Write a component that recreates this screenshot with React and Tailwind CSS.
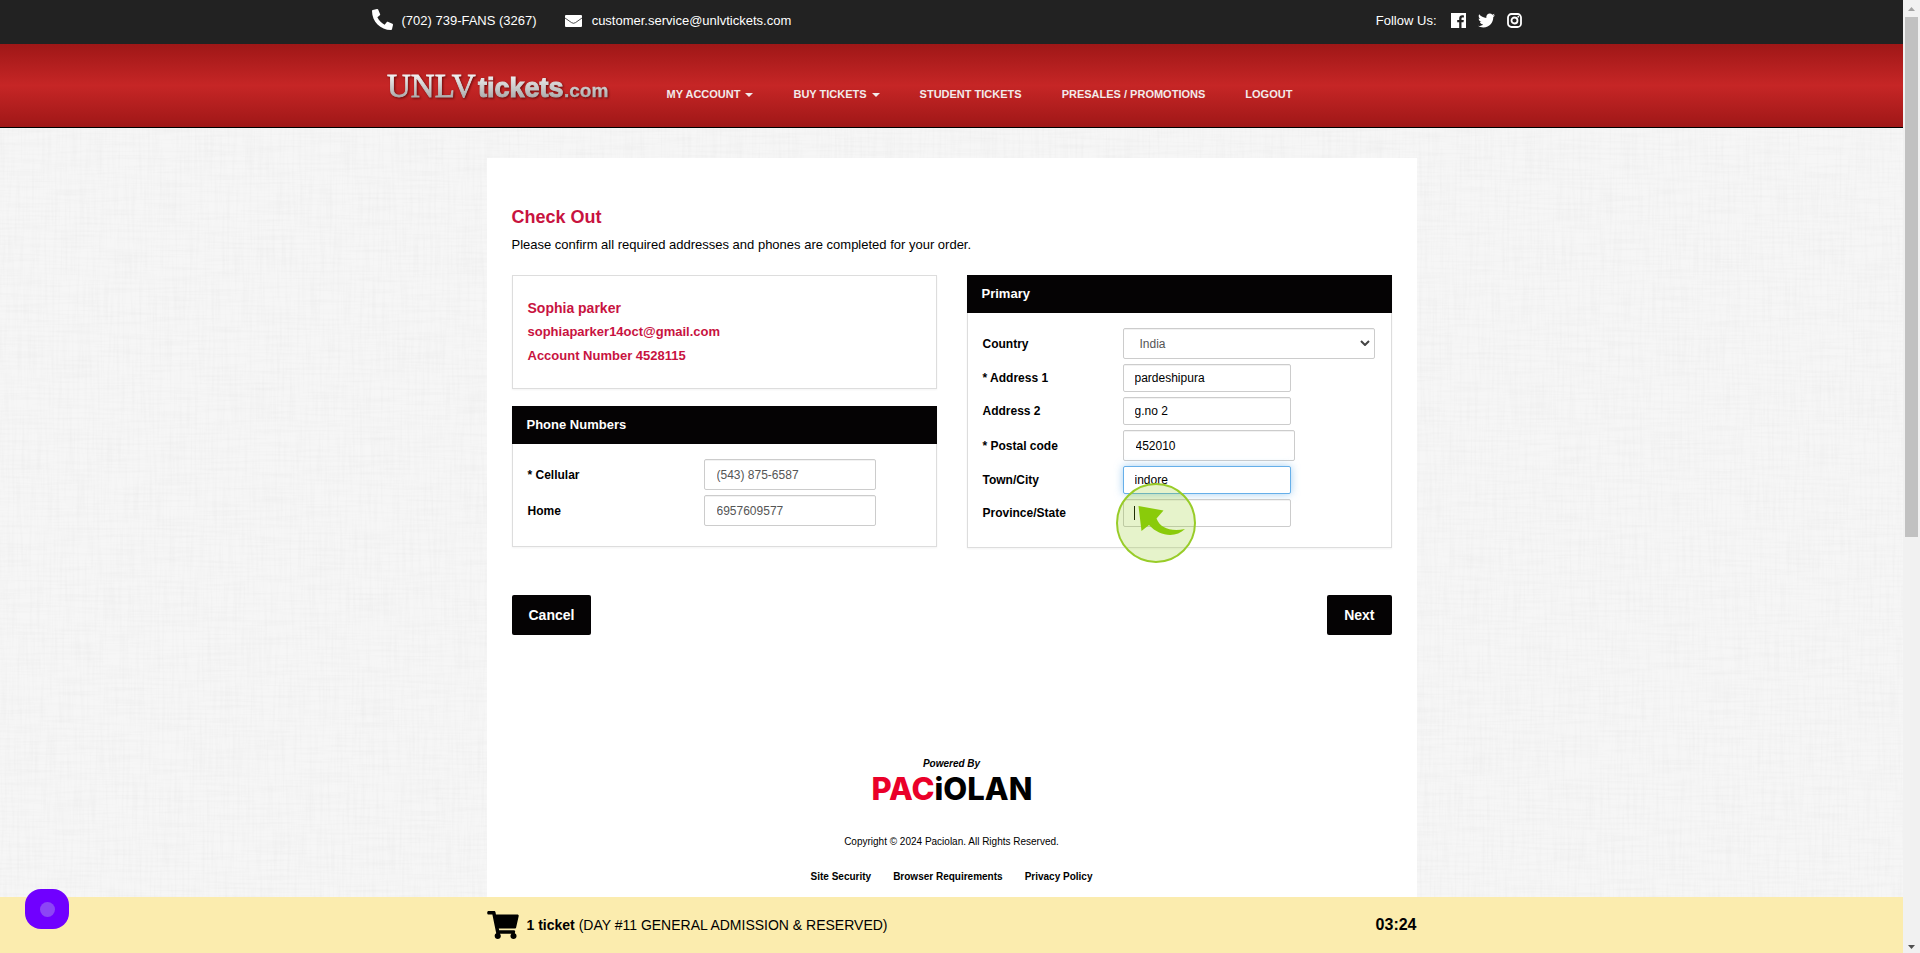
import { useState } from "react";
import { FaPhone, FaTwitter, FaShoppingCart } from "react-icons/fa";

const navLinks = [
  { label: "MY ACCOUNT", menu: true },
  { label: "BUY TICKETS", menu: true },
  { label: "STUDENT TICKETS" },
  { label: "PRESALES / PROMOTIONS" },
  { label: "LOGOUT" },
];

function App() {
  const [formData, setFormData] = useState({
    cellular: "(543) 875-6587",
    home: "6957609577",
    country: "India",
    address1: "pardeshipura",
    address2: "g.no 2",
    postalCode: "452010",
    city: "indore",
    state: "",
  });

  const handleChange = (e) => {
    setFormData({ ...formData, [e.target.name]: e.target.value });
  };

  return (
    <div className="flex h-screen overflow-hidden font-['Liberation_Sans',Arial,sans-serif] text-black">
      <div className="relative flex min-w-0 flex-1 flex-col">
        <TopBar />
        <Header />

        <div className="relative min-h-0 flex-1 overflow-hidden bg-[#f6f6f6]">
          <LinenTexture />
          <main className="relative mx-auto mt-[30px] min-h-full max-w-[930px] bg-white px-[25px] pt-[47px]">
            <h1 className="text-lg leading-6 font-bold text-[#c8133f]">Check Out</h1>
            <p className="mt-[6px] text-[13px] leading-5">
              Please confirm all required addresses and phones are completed for your order.
            </p>

            <form onSubmit={(e) => e.preventDefault()}>
              <div className="mt-5 grid grid-cols-2 items-start gap-[30px]">
                <div className="flex flex-col gap-[17px]">
                  <div className="border border-[#ddd] px-[15px] py-5 text-[13px] leading-6 font-bold text-[#c8133f] shadow-xs">
                    <p className="text-sm leading-6">Sophia parker</p>
                    <p>sophiaparker14oct@gmail.com</p>
                    <p>Account Number 4528115</p>
                  </div>

                  <Panel title="Phone Numbers">
                    <Row label="* Cellular" htmlFor="cellular" labelClass="w-44">
                      <InputField tall name="cellular" type="tel" value={formData.cellular} onChange={handleChange} color="text-[#555]" />
                    </Row>
                    <Row label="Home" htmlFor="home" labelClass="w-44">
                      <InputField tall name="home" type="tel" value={formData.home} onChange={handleChange} color="text-[#555]" />
                    </Row>
                  </Panel>
                </div>

                <Panel title="Primary">
                  <Row label="Country" htmlFor="country">
                    <div className="relative w-[252px]">
                      <select
                        id="country"
                        name="country"
                        value={formData.country}
                        onChange={handleChange}
                        className="h-[31px] w-full appearance-none rounded-xs border border-[#ccc] bg-white px-4 text-xs text-[#555] inset-shadow-2xs"
                      >
                        <option>India</option>
                        <option>United States</option>
                        <option>Canada</option>
                      </select>
                      <svg viewBox="0 0 10 6" className="pointer-events-none absolute top-3 right-[5px] h-[6px] w-[10px]">
                        <path d="M1 1l4 4 4-4" fill="none" stroke="#444" strokeWidth="2" />
                      </svg>
                    </div>
                  </Row>
                  <Row label="* Address 1" htmlFor="address1">
                    <InputField name="address1" value={formData.address1} onChange={handleChange} />
                  </Row>
                  <Row label="Address 2" htmlFor="address2">
                    <InputField name="address2" value={formData.address2} onChange={handleChange} />
                  </Row>
                  <Row label="* Postal code" htmlFor="postalCode">
                    <InputField tall name="postalCode" value={formData.postalCode} onChange={handleChange} />
                  </Row>
                  <Row label="Town/City" htmlFor="city">
                    <InputField active name="city" value={formData.city} onChange={handleChange} />
                  </Row>
                  <Row label="Province/State" htmlFor="state">
                    <div className="relative">
                      <InputField name="state" value={formData.state} onChange={handleChange} />
                      <ClickMarker />
                    </div>
                  </Row>
                </Panel>
              </div>

              <div className="mt-[47px] flex justify-between">
                <button type="button" className="h-10 rounded-xs bg-[#050304] px-[17px] text-sm font-bold text-white">
                  Cancel
                </button>
                <button type="submit" className="h-10 rounded-xs bg-[#050304] px-[17px] text-sm font-bold text-white">
                  Next
                </button>
              </div>
            </form>

            <Footer />
          </main>
        </div>

        <CartBar />
        <button
          type="button"
          aria-label="Open widget"
          className="absolute bottom-6 left-[25px] flex h-10 w-11 items-center justify-center rounded-2xl bg-[#7000ff]"
        >
          <span className="h-[15px] w-[15px] rounded-full bg-[#8c46f5]" />
        </button>
      </div>
      <Scrollbar />
    </div>
  );
}

const TopBar = () => (
  <div className="h-11 shrink-0 bg-[#222] text-[13px] text-white">
    <div className="mx-auto flex h-full max-w-[1160px] items-center justify-between pr-[10px]">
      <div className="flex items-center pb-[2px]">
        <FaPhone className="mb-1 h-[21px] w-[21px] -scale-x-100" />
        <span className="ml-[9px]">(702) 739-FANS (3267)</span>
        <svg viewBox="0 0 17 12" className="ml-7 h-3 w-[17px]">
          <rect width="17" height="12" rx="1" fill="#fff" />
          <path d="M0 3l6.500 4.600q2 1.400 4 0L17 3" fill="none" stroke="#222" strokeWidth="0.800" />
        </svg>
        <a href="#email" className="ml-[10px]">customer.service@unlvtickets.com</a>
      </div>
      <div className="flex items-center pb-[2px]">
        <span>Follow Us:</span>
        <div className="ml-[14px] flex items-center gap-3 pb-[2px]">
          <a href="#facebook" aria-label="Facebook">
            <svg viewBox="0 0 15 15" className="h-[15px] w-[15px]">
              <path fill="#fff" d="M0 0h15v15h-4.500V9.300h2L12.800 7h-2.300V5.600c0-.7.300-1.100 1.100-1.100h1.300V2.400C12.600 2.300 12 2.300 11.300 2.300 9.400 2.300 8.200 3.400 8.200 5.400V7h-2v2.300h2V15H0z" />
            </svg>
          </a>
          <a href="#twitter" aria-label="Twitter">
            <FaTwitter className="h-[17px] w-[17px]" />
          </a>
          <a href="#instagram" aria-label="Instagram">
            <svg viewBox="0 0 15 15" className="h-[15px] w-[15px]" fill="none" stroke="#fff" strokeWidth="1.800">
              <rect x="1" y="1" width="13" height="13" rx="3.500" />
              <circle cx="7.500" cy="7.500" r="3" />
              <circle cx="11.300" cy="3.700" r="0.900" fill="#fff" stroke="none" />
            </svg>
          </a>
        </div>
      </div>
    </div>
  </div>
);

const Header = () => (
  <header className="h-[84px] shrink-0 border-b border-black bg-[linear-gradient(#9f1717,#c62626_50%,#9f1717)]">
    <div className="mx-auto flex h-full max-w-[1130px] items-center">
      <a href="#home" aria-label="UNLVtickets.com">
        <svg viewBox="0 0 224 40" className="h-10 w-56 drop-shadow-[1px_1px_1px_rgba(70,0,0,0.7)]">
          <defs>
            <linearGradient id="silver" gradientUnits="userSpaceOnUse" x1="0" y1="8" x2="0" y2="34">
              <stop offset="0" stopColor="#f4f4f4" />
              <stop offset="1" stopColor="#a5a5a5" />
            </linearGradient>
          </defs>
          <g fill="url(#silver)" stroke="url(#silver)">
            <text x="0" y="31" fontSize="33" strokeWidth="0.800" fontFamily="Liberation Serif, serif">UNLV</text>
            <text x="91" y="31" fontSize="27" strokeWidth="1" fontWeight="bold" fontFamily="Liberation Sans, sans-serif">tickets</text>
            <text x="177" y="31" fontSize="19" strokeWidth="0.300" fontWeight="bold" fontFamily="Liberation Sans, sans-serif">.com</text>
          </g>
        </svg>
      </a>
      <nav className="ml-14 flex gap-10 pt-[18px] text-[11px] font-bold text-[#f3eaea]">
        {navLinks.map((link) => (
          <a key={link.label} href="#nav" className="flex items-center gap-[5px] whitespace-nowrap">
            {link.label}
            {link.menu && (
              <svg viewBox="0 0 8 4" className="h-1 w-2">
                <path d="M0 0h8L4 4z" fill="currentColor" />
              </svg>
            )}
          </a>
        ))}
      </nav>
    </div>
  </header>
);

// Woven linen pattern behind the page
const LinenTexture = () => (
  <svg aria-hidden="true" className="absolute inset-0 h-full w-full">
    <filter id="weft">
      <feTurbulence type="fractalNoise" baseFrequency="0.02 0.4" numOctaves="2" seed="3" />
      <feColorMatrix values="0 0 0 0 0.5  0 0 0 0 0.5  0 0 0 0 0.5  0.16 0 0 0 -0.065" />
    </filter>
    <filter id="warp">
      <feTurbulence type="fractalNoise" baseFrequency="0.4 0.02" numOctaves="2" seed="8" />
      <feColorMatrix values="0 0 0 0 0.5  0 0 0 0 0.5  0 0 0 0 0.5  0.16 0 0 0 -0.065" />
    </filter>
    <rect width="100%" height="100%" filter="url(#weft)" />
    <rect width="100%" height="100%" filter="url(#warp)" />
  </svg>
);

const Panel = ({ title, children }) => (
  <section className="shadow-xs">
    <h2 className="bg-[#050304] px-[15px] text-[13px] leading-[38px] font-bold text-white">{title}</h2>
    <div className="flex flex-col gap-[5px] border border-t-0 border-[#ddd] px-[15px] pt-[15px] pb-5">{children}</div>
  </section>
);

const Row = ({ label, htmlFor, labelClass = "w-[140px]", children }) => (
  <div className="flex items-center">
    <label htmlFor={htmlFor} className={`${labelClass} shrink-0 text-xs font-bold`}>
      {label}
    </label>
    {children}
  </div>
);

const InputField = ({ name, type = "text", value, onChange, tall, active, color = "text-black" }) => (
  <input
    id={name}
    type={type}
    name={name}
    value={value}
    onChange={onChange}
    className={`block rounded-xs border bg-white text-xs outline-none ${color} ${
      tall ? "h-[31px] w-[172px] px-3" : "h-7 w-[168px] px-[11px]"
    } ${active ? "border-[#66afe9] shadow-[0_0_8px_rgba(102,175,233,0.6)]" : "border-[#ccc] inset-shadow-2xs"}`}
  />
);

// Pointer highlight with the text caret under it
const ClickMarker = () => (
  <svg viewBox="0 0 80 80" aria-hidden="true" className="pointer-events-none absolute -top-4 -left-[7px] h-20 w-20">
    <path d="M18.500 23v14" stroke="#000" />
    <circle cx="40" cy="40" r="39" fill="#8cc811" fillOpacity="0.22" stroke="#98cc28" strokeWidth="2" />
    <path fill="#8acb0a" d="M22.500 23L47.500 27.500 40.500 35.500C44 45 55 49 69 46C60 55 44 54 33 42L25.500 48Z" />
  </svg>
);

const Footer = () => (
  <footer className="mt-[122px] flex flex-col items-center">
    <p className="text-[10px] leading-[14px] font-bold italic">Powered By</p>
    <svg viewBox="0 0 180 38" role="img" aria-label="Paciolan" className="h-[38px] w-[180px]">
      <text x="90" y="29" textAnchor="middle" fontSize="31" fontWeight="800" fontFamily="Inter, sans-serif">
        <tspan fill="#ea0029">PAC</tspan>
        <tspan>iOLAN</tspan>
      </text>
    </svg>
    <p className="mt-[25px] text-[10px] leading-4">Copyright © 2024 Paciolan. All Rights Reserved.</p>
    <div className="mt-[19px] flex gap-[22px] text-[10px] leading-4 font-bold">
      <a href="#security">Site Security</a>
      <a href="#browser">Browser Requirements</a>
      <a href="#privacy">Privacy Policy</a>
    </div>
  </footer>
);

const CartBar = () => (
  <div className="relative h-14 shrink-0 bg-[#fbecae]">
    <div className="mx-auto flex h-full max-w-[930px] items-center">
      <FaShoppingCart className="h-7 w-8" />
      <p className="ml-2 text-sm">
        <b>1 ticket</b> (DAY #11 GENERAL ADMISSION &amp; RESERVED)
      </p>
      <span className="ml-auto text-base font-bold">03:24</span>
    </div>
  </div>
);

const Scrollbar = () => (
  <div aria-hidden="true" className="flex w-[17px] shrink-0 flex-col items-center justify-between bg-[#f1f1f1]">
    <div className="flex flex-col items-center">
      <svg viewBox="0 0 17 17" className="h-[17px] w-[17px]">
        <path fill="#a3a3a3" d="M5 11l3.500-4 3.500 4z" />
      </svg>
      <div className="h-[520px] w-[13px] bg-[#c1c1c1]" />
    </div>
    <svg viewBox="0 0 17 17" className="h-[17px] w-[17px]">
      <path fill="#505050" d="M5 9l3.500 4L12 9z" />
    </svg>
  </div>
);

export default App;
